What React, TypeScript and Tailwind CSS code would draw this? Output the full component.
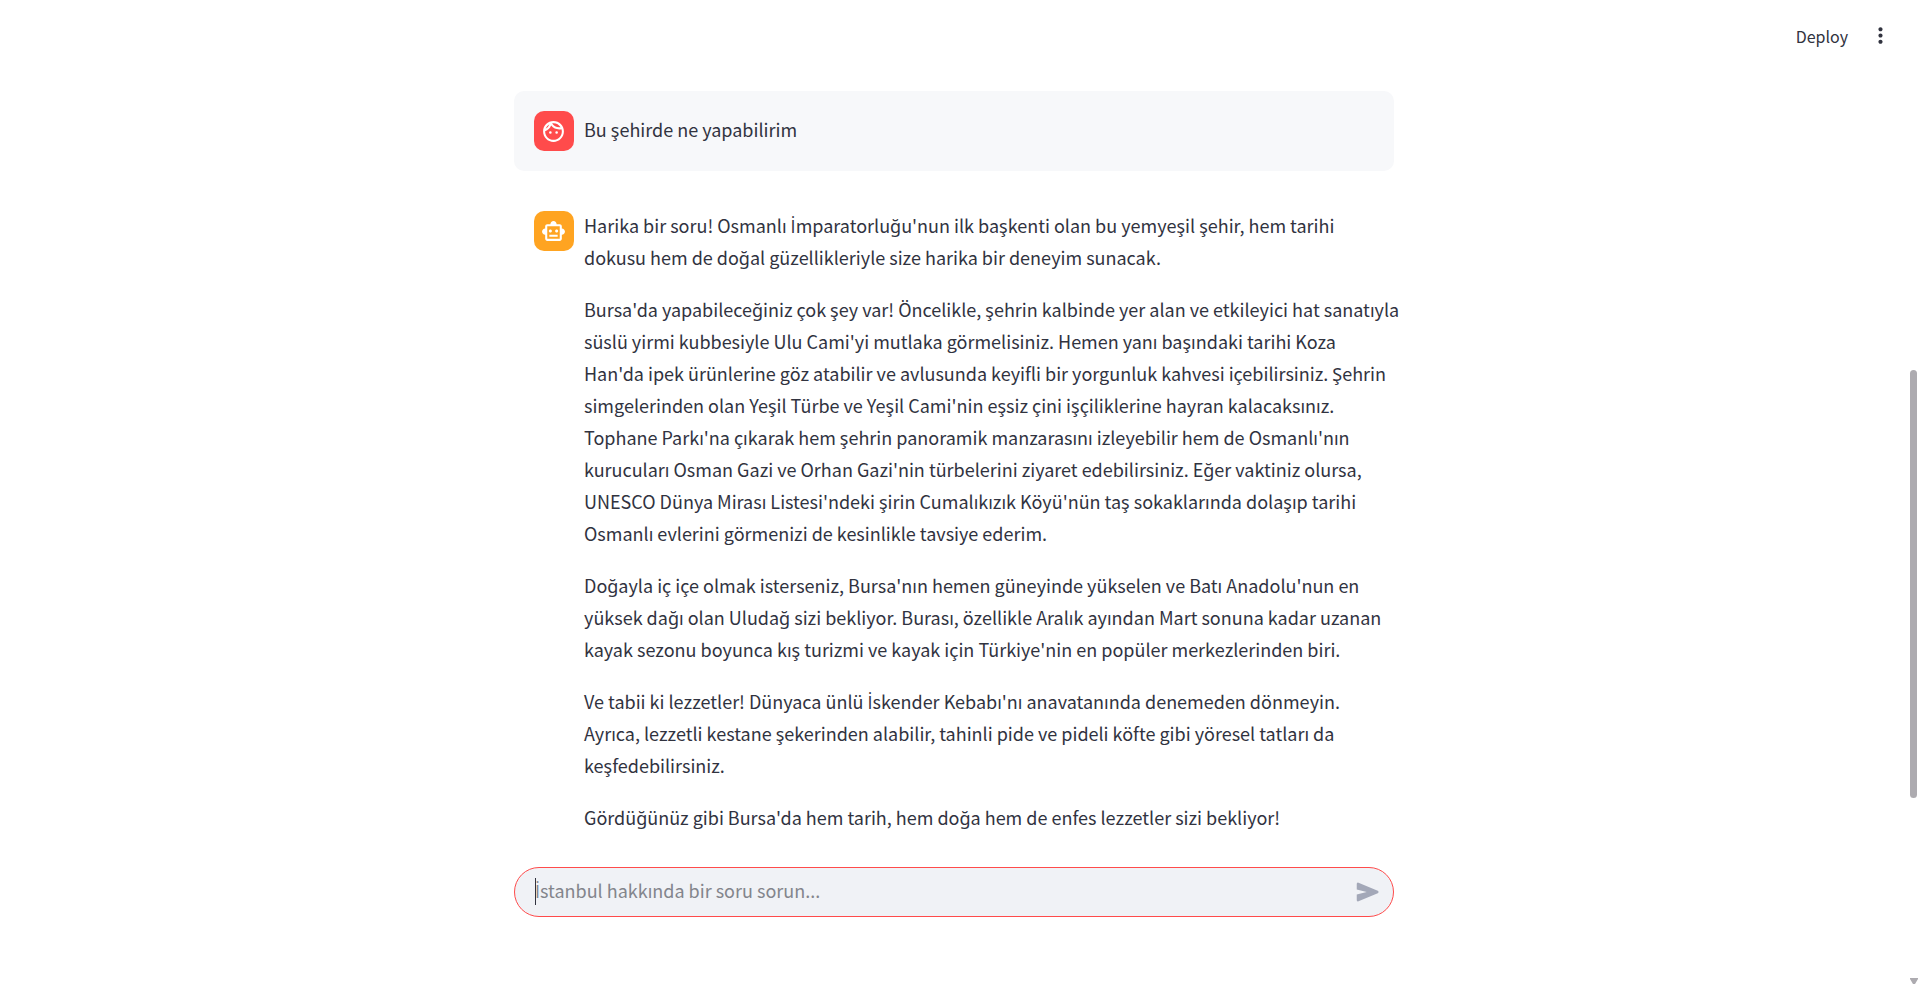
import { Fragment, useState } from "react";
import type { ReactNode } from "react";
import { MdMoreVert, MdOutlineFace } from "react-icons/md";

const answer: string[][] = [
  [
    "Harika bir soru! Osmanlı İmparatorluğu'nun ilk başkenti olan bu yemyeşil şehir, hem tarihi",
    "dokusu hem de doğal güzellikleriyle size harika bir deneyim sunacak.",
  ],
  [
    "Bursa'da yapabileceğiniz çok şey var! Öncelikle, şehrin kalbinde yer alan ve etkileyici hat sanatıyla",
    "süslü yirmi kubbesiyle Ulu Cami'yi mutlaka görmelisiniz. Hemen yanı başındaki tarihi Koza",
    "Han'da ipek ürünlerine göz atabilir ve avlusunda keyifli bir yorgunluk kahvesi içebilirsiniz. Şehrin",
    "simgelerinden olan Yeşil Türbe ve Yeşil Cami'nin eşsiz çini işçiliklerine hayran kalacaksınız.",
    "Tophane Parkı'na çıkarak hem şehrin panoramik manzarasını izleyebilir hem de Osmanlı'nın",
    "kurucuları Osman Gazi ve Orhan Gazi'nin türbelerini ziyaret edebilirsiniz. Eğer vaktiniz olursa,",
    "UNESCO Dünya Mirası Listesi'ndeki şirin Cumalıkızık Köyü'nün taş sokaklarında dolaşıp tarihi",
    "Osmanlı evlerini görmenizi de kesinlikle tavsiye ederim.",
  ],
  [
    "Doğayla iç içe olmak isterseniz, Bursa'nın hemen güneyinde yükselen ve Batı Anadolu'nun en",
    "yüksek dağı olan Uludağ sizi bekliyor. Burası, özellikle Aralık ayından Mart sonuna kadar uzanan",
    "kayak sezonu boyunca kış turizmi ve kayak için Türkiye'nin en popüler merkezlerinden biri.",
  ],
  [
    "Ve tabii ki lezzetler! Dünyaca ünlü İskender Kebabı'nı anavatanında denemeden dönmeyin.",
    "Ayrıca, lezzetli kestane şekerinden alabilir, tahinli pide ve pideli köfte gibi yöresel tatları da",
    "keşfedebilirsiniz.",
  ],
  ["Gördüğünüz gibi Bursa'da hem tarih, hem doğa hem de enfes lezzetler sizi bekliyor!"],
];

function Turkish({ text }: { text: string }) {
  return (
    <>
      {text.split("İ").map((part, index) => (
        <Fragment key={index}>
          {index > 0 && <span className="font-['Open_Sans',sans-serif] leading-none">İ</span>}
          {part}
        </Fragment>
      ))}
    </>
  );
}

function Avatar({ color, children }: { color: string; children: ReactNode }) {
  return (
    <div className={`flex size-10 shrink-0 items-center justify-center rounded-[10px] pr-px text-white ${color}`}>
      {children}
    </div>
  );
}

function RobotIcon() {
  return (
    <svg viewBox="0 0 24 24" className="size-[25px]" fill="currentColor" aria-hidden="true">
      <path d="M20 9V7c0-1.1-.9-2-2-2h-3c0-1.66-1.34-3-3-3S9 3.34 9 5H6c-1.1 0-2 .9-2 2v2c-1.66 0-3 1.34-3 3s1.34 3 3 3v4c0 1.1.9 2 2 2h12c1.1 0 2-.9 2-2v-4c1.66 0 3-1.34 3-3s-1.34-3-3-3zm-2 10H6V7h12v12zm-9-6c-.83 0-1.5-.67-1.5-1.5S8.17 10 9 10s1.5.67 1.5 1.5S9.83 13 9 13zm7.5-1.5c0 .83-.67 1.5-1.5 1.5s-1.5-.67-1.5-1.5.67-1.5 1.5-1.5 1.5.67 1.5 1.5zM8 15h8v2H8v-2z" />
    </svg>
  );
}

function SendIcon() {
  return (
    <svg viewBox="0 -960 960 960" className="size-[30px]" fill="currentColor" aria-hidden="true">
      <path d="M792-443 176-183q-20 8-38-3.5T120-220v-180l320-80-320-80v-180q0-22 18-33.5t38-3.5l616 260q25 11 25 37t-25 37Z" />
    </svg>
  );
}

function Scrollbar() {
  return (
    <div className="flex w-[11px] shrink-0 flex-col items-center pb-0.5" aria-hidden="true">
      <div className="flex-[370]" />
      <div className="w-[7px] flex-[428] rounded-full bg-[#adabb0]" />
      <div className="flex-[180]" />
      <svg viewBox="0 0 8 6" className="h-1.5 w-2" fill="#adabb0">
        <path d="M0 0h8v1L5 6H3L0 1z" />
      </svg>
    </div>
  );
}

export default function App() {
  const [message, setMessage] = useState("");

  return (
    <div className="flex min-h-screen bg-white font-['Noto_Sans_CJK_SC','Noto_Sans',sans-serif] text-[18px] leading-8 text-[#31333f]">
      <div className="flex min-w-0 flex-1 flex-col">
        <header className="flex h-[71px] items-center justify-end gap-5 pr-[15px]">
          <button type="button" className="text-base">Deploy</button>
          <button type="button" aria-label="Menu" className="flex size-[25px] items-center justify-center">
            <MdMoreVert size={25} />
          </button>
        </header>

        <main className="mx-auto flex w-full max-w-[880px] flex-1 flex-col pt-5">
          <section className="flex gap-2.5 rounded-[10px] bg-[#f7f8fa] p-5">
            <Avatar color="bg-[#ff4b4b]">
              <MdOutlineFace size={25} />
            </Avatar>
            <p className="pt-0.5">Bu şehirde ne yapabilirim</p>
          </section>

          <section className="mt-[38px] flex gap-2.5 pl-5">
            <div className="pt-0.5">
              <Avatar color="bg-[#ffa421]">
                <RobotIcon />
              </Avatar>
            </div>
            <div className="flex flex-col gap-5">
              {answer.map((lines) => (
                <p key={lines[0]}>
                  {lines.map((line) => (
                    <span key={line} className="block whitespace-nowrap">
                      <Turkish text={line} />
                    </span>
                  ))}
                </p>
              ))}
            </div>
          </section>

          <form
            className="relative mt-[34px] flex h-[50px] items-center rounded-full border border-[#ff4b4b] bg-[#f0f2f6] pr-2.5 pl-5"
            onSubmit={(event) => event.preventDefault()}
          >
            {message === "" && (
              <>
                <label htmlFor="message" className="pointer-events-none absolute top-1.5 left-5 text-[#83858c]">
                  <Turkish text="İstanbul hakkında bir soru sorun..." />
                </label>
                <span className="absolute top-2.5 left-5 h-[27px] w-px bg-[#31333f]" />
              </>
            )}
            <input
              id="message"
              type="text"
              value={message}
              onChange={(event) => setMessage(event.target.value)}
              className="min-w-0 flex-1 bg-transparent outline-none"
            />
            <button type="submit" aria-label="Gönder" className="text-[#a3a8b8]">
              <SendIcon />
            </button>
          </form>
        </main>
      </div>
      <Scrollbar />
    </div>
  );
}
